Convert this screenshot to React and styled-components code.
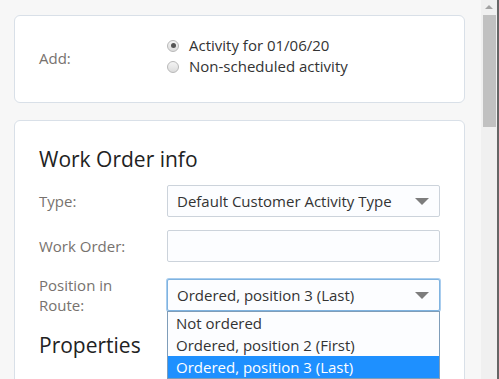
import React from 'react';
import styled, { createGlobalStyle } from 'styled-components';

const GlobalStyle = createGlobalStyle`
    html, body {
        margin: 0;
        padding: 0;
        background: #f7f7f7;
        overflow: hidden;
    }
    body {
        font-family: "Open Sans", "Noto Sans", sans-serif;
    }
`;

const Window = styled.div`
    display: flex;
    width: 499px;
    height: 379px;
    overflow: hidden;
`;

const Page = styled.div`
    flex: 1;
    padding: 15px 16px 0 14px;
    display: flex;
    flex-direction: column;
    gap: 17px;
`;

const Card = styled.div`
    background: #fff;
    border: 1px solid #d9e0e8;
    border-radius: 6px;
    padding: ${props => props.pad || '24px'};
`;

const Row = styled.div`
    display: grid;
    grid-template-columns: 128px 273px;
    align-items: ${props => props.top ? 'start' : 'center'};
    margin-bottom: ${props => props.mb || '13px'};
`;

const Label = styled.label`
    color: #77726e;
    font-size: 15px;
    line-height: 20px;
    padding-top: ${props => props.pt || '0'};
`;

const Radios = styled.div`
    display: flex;
    flex-direction: column;
`;

const RadioLine = styled.div`
    display: flex;
    align-items: center;
    gap: 10px;
    font-size: 15px;
    line-height: 21px;
    color: #333;
`;

const Dot = styled.span`
    width: 12px;
    height: 12px;
    border-radius: 50%;
    border: 1px solid #b8b8b8;
    background: linear-gradient(#f4f4f4, #dcdcdc);
    box-sizing: border-box;
    display: flex;
    align-items: center;
    justify-content: center;
    &::after {
        content: '';
        width: 5px;
        height: 5px;
        border-radius: 50%;
        background: ${props => props.checked ? '#555' : 'transparent'};
    }
`;

const Heading = styled.h3`
    margin: 0 0 12px;
    font-size: 21px;
    font-weight: 400;
    color: #222;
    line-height: 28px;
`;

const SelectBox = styled.div`
    position: relative;
    height: 32px;
    box-sizing: border-box;
    border: 1px solid ${props => props.focus ? '#7fb3e0' : '#ccd3db'};
    box-shadow: ${props => props.focus ? '0 0 0 1px #a9cdee' : 'none'};
    border-radius: 2px;
    background: #fcfdff;
    display: flex;
    align-items: center;
    padding: 0 9px;
    font-size: 15px;
    color: #333;
    margin-top: ${props => props.mt || '0'};
`;

const Arrow = styled.span`
    position: absolute;
    right: 10px;
    top: 12px;
    width: 0;
    height: 0;
    border-left: 7.5px solid transparent;
    border-right: 7.5px solid transparent;
    border-top: 7px solid #7d7d7d;
`;

const Menu = styled.div`
    position: absolute;
    left: -1px;
    right: -1px;
    top: 31px;
    background: #fcfdff;
    border: 1px solid #7f9db9;
    z-index: 2;
`;

const Option = styled.div`
    padding: 0 8px;
    height: 22px;
    line-height: 22px;
    font-size: 15px;
    color: ${props => props.active ? '#fff' : '#333'};
    background: ${props => props.active ? '#1e90ff' : 'transparent'};
`;

const ScrollBar = styled.div`
    width: 16px;
    background: #f0f0f0;
    border-right: 2px solid #666;
    display: flex;
    flex-direction: column;
    align-items: center;
`;

const ScrollArrow = styled.span`
    margin-top: 5px;
    width: 0;
    height: 0;
    border-left: 4px solid transparent;
    border-right: 4px solid transparent;
    border-bottom: 4px solid #a3a3a3;
`;

const Thumb = styled.div`
    margin-top: 6px;
    width: 13px;
    height: 112px;
    background: #c1c1c1;
`;

const App = () => {
    return (
        <Window>
            <GlobalStyle />
            <Page>
                <Card pad="19px 24px 25px">
                    <Row mb="0">
                        <Label pt="3px">Add:</Label>
                        <Radios>
                            <RadioLine><Dot checked />Activity for 01/06/20</RadioLine>
                            <RadioLine><Dot />Non-scheduled activity</RadioLine>
                        </Radios>
                    </Row>
                </Card>
                <Card pad="24px 24px 120px">
                    <Heading>Work Order info</Heading>
                    <Row>
                        <Label>Type:</Label>
                        <SelectBox>
                            Default Customer Activity Type
                            <Arrow />
                        </SelectBox>
                    </Row>
                    <Row>
                        <Label>Work Order:</Label>
                        <SelectBox />
                    </Row>
                    <Row top mb="16px">
                        <Label>Position in<br />Route:</Label>
                        <SelectBox focus mt="4px">
                            Ordered, position 3 (Last)
                            <Arrow />
                            <Menu>
                                <Option>Not ordered</Option>
                                <Option>Ordered, position 2 (First)</Option>
                                <Option active>Ordered, position 3 (Last)</Option>
                            </Menu>
                        </SelectBox>
                    </Row>
                    <Heading>Properties</Heading>
                </Card>
            </Page>
            <ScrollBar>
                <ScrollArrow />
                <Thumb />
            </ScrollBar>
        </Window>
    );
}

export default App;
